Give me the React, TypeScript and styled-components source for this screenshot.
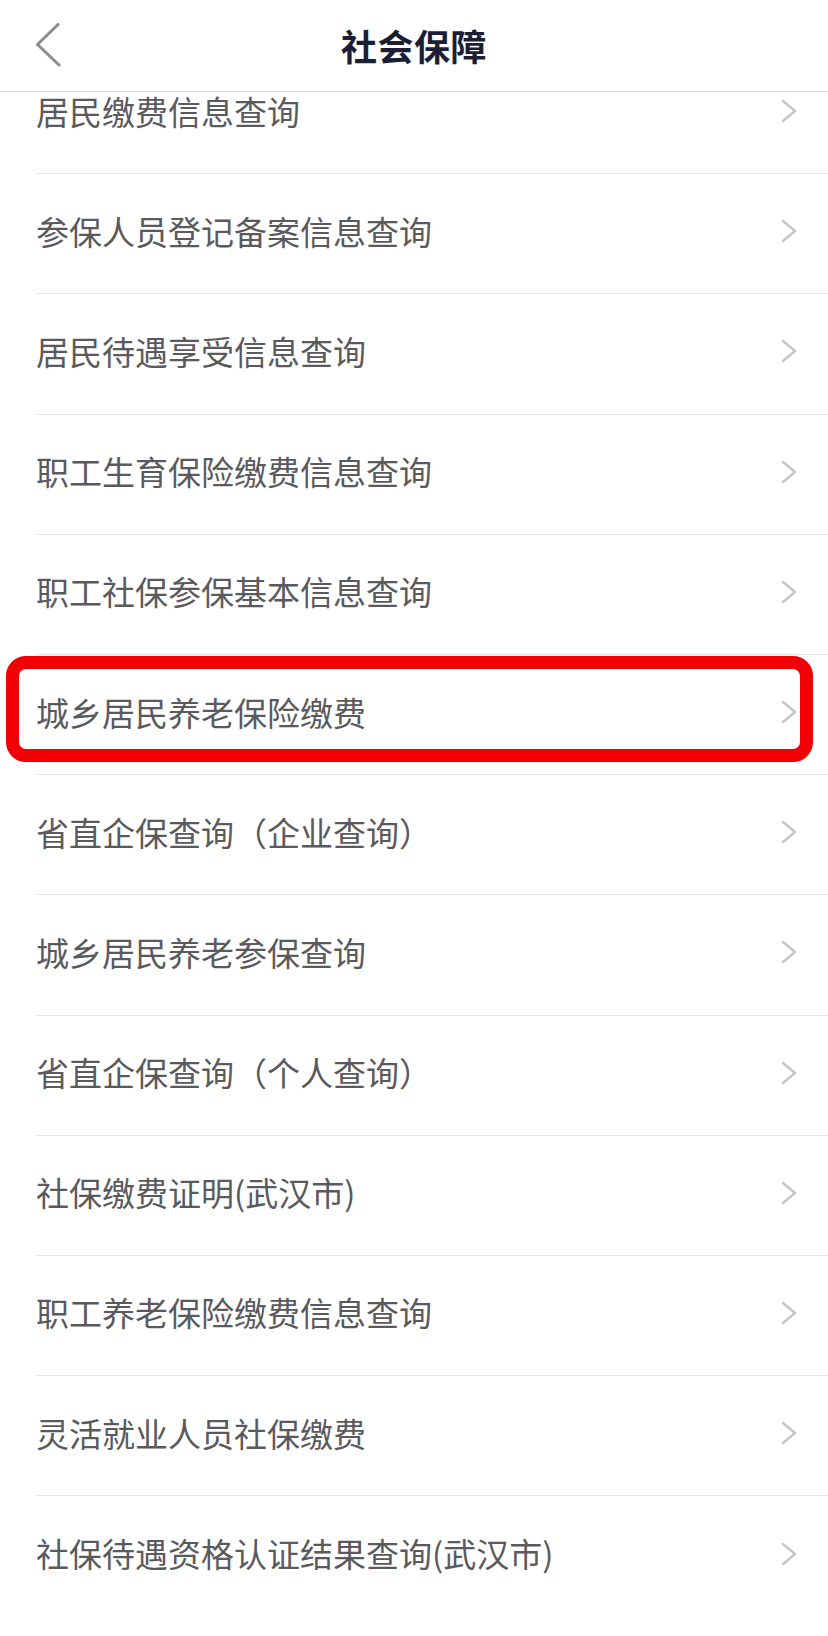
import React from 'react';
import styled, { createGlobalStyle } from 'styled-components';

const GlobalStyle = createGlobalStyle`
  html, body {
    margin: 0;
    padding: 0;
    background: #ffffff;
  }
  body {
    font-family: "Noto Sans CJK SC", "Noto Sans", sans-serif;
  }
`;

const Page = styled.div`
  width: 828px;
  height: 1636px;
  display: flex;
  flex-direction: column;
  background: #ffffff;
  overflow: hidden;
`;

const Header = styled.header`
  position: relative;
  z-index: 2;
  flex: 0 0 auto;
  height: 91px;
  display: grid;
  grid-template-columns: 1fr auto 1fr;
  align-items: center;
  background: #ffffff;
  border-bottom: 1px solid #dcdcdc;
`;

const BackButton = styled.button`
  justify-self: start;
  margin-left: 33px;
  margin-bottom: 2px;
  padding: 0;
  width: 30px;
  height: 46px;
  border: none;
  background: transparent;
  display: flex;
  align-items: center;
  justify-content: center;
`;

const Title = styled.h1`
  margin: 0 0 2px;
  font-size: 36px;
  font-weight: 700;
  color: #1c1e33;
  letter-spacing: 0.5px;
`;

const Viewport = styled.div`
  flex: 1 1 auto;
  overflow: hidden;
`;

/* list is scrolled up a little, first row sits partly under the header */
const List = styled.ul`
  list-style: none;
  margin: -38px 0 0;
  padding: 0 0 0 36px;
`;

const Row = styled.li<{ $last?: boolean }>`
  position: relative;
  box-sizing: border-box;
  height: 120.2px;
  display: flex;
  align-items: center;
  justify-content: space-between;
  padding: 0 30px 5px 0;
  border-bottom: ${(p) => (p.$last ? 'none' : '1px solid #e6e6e6')};
`;

const Label = styled.span`
  font-size: 33px;
  color: #5a5a5e;
  line-height: 1;
`;

const Highlight = styled.div`
  position: absolute;
  top: 1px;
  left: -30px;
  right: 15px;
  bottom: 12px;
  border: 13px solid #f20006;
  border-radius: 20px;
  pointer-events: none;
`;

const items = [
  '居民缴费信息查询',
  '参保人员登记备案信息查询',
  '居民待遇享受信息查询',
  '职工生育保险缴费信息查询',
  '职工社保参保基本信息查询',
  '城乡居民养老保险缴费',
  '省直企保查询（企业查询）',
  '城乡居民养老参保查询',
  '省直企保查询（个人查询）',
  '社保缴费证明(武汉市)',
  '职工养老保险缴费信息查询',
  '灵活就业人员社保缴费',
  '社保待遇资格认证结果查询(武汉市)',
];

const highlighted = 5;

const BackIcon = () => (
  <svg width="26" height="44" viewBox="0 0 26 44">
    <polyline
      points="23,1.5 2.5,21.5 24,42"
      fill="none"
      stroke="#8c8c8c"
      strokeWidth="3"
      strokeLinecap="round"
      strokeLinejoin="round"
    />
  </svg>
);

const Chevron = () => (
  <svg width="18" height="26" viewBox="0 0 18 26">
    <polyline
      points="3,3 15,13 3,23"
      fill="none"
      stroke="#c6c6c6"
      strokeWidth="2.5"
      strokeLinecap="round"
      strokeLinejoin="round"
    />
  </svg>
);

export default function App() {
  return (
    <>
      <GlobalStyle />
      <Page>
        <Header>
          <BackButton aria-label="返回">
            <BackIcon />
          </BackButton>
          <Title>社会保障</Title>
          <span />
        </Header>
        <Viewport>
          <List>
            {items.map((label, i) => (
              <Row key={label} $last={i === items.length - 1}>
                <Label>{label}</Label>
                <Chevron />
                {i === highlighted && <Highlight />}
              </Row>
            ))}
          </List>
        </Viewport>
      </Page>
    </>
  );
}
